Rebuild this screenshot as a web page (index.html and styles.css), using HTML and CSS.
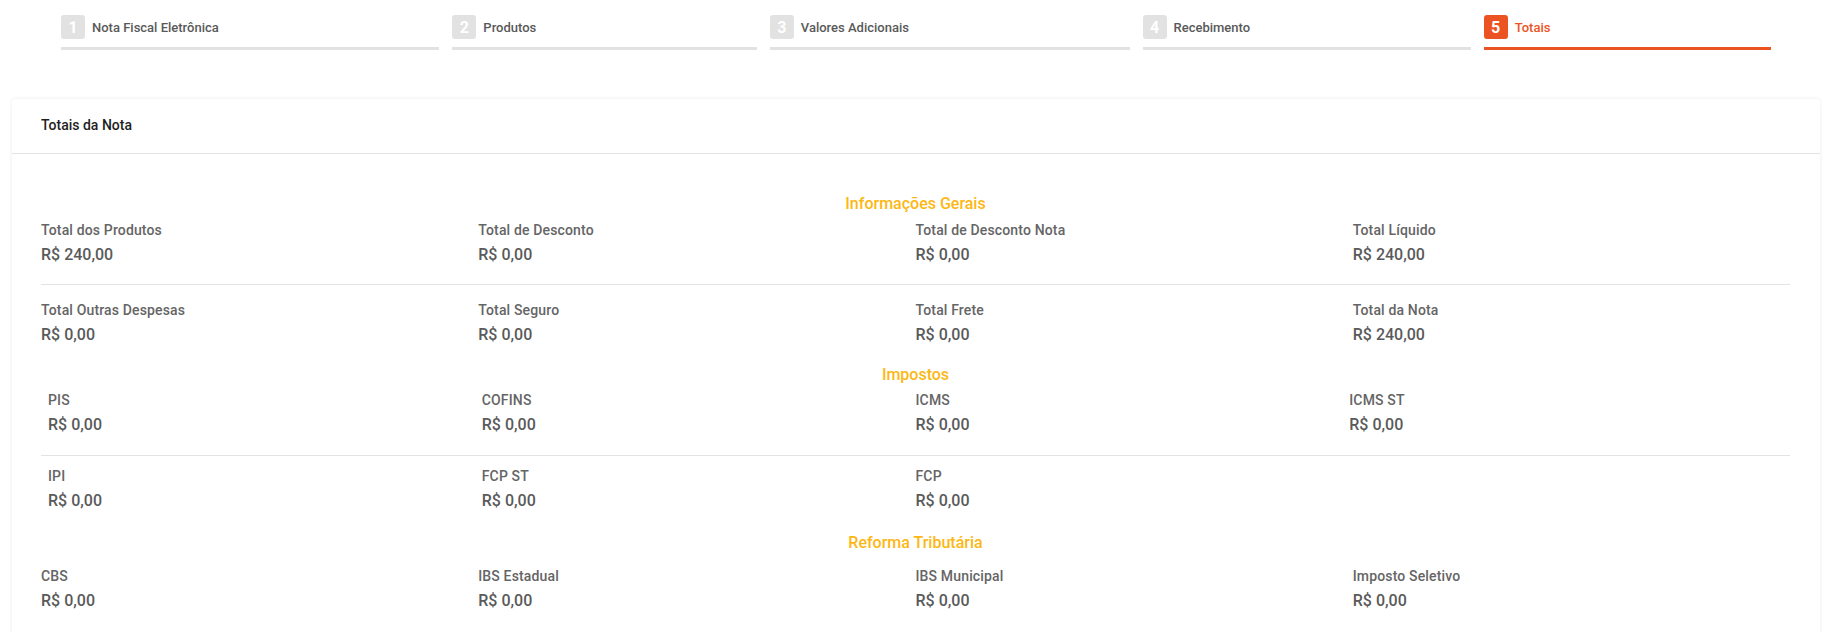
FILE: index.html
```html
<!DOCTYPE html>
<html lang="pt-BR">
<head>
<meta charset="utf-8">
<title>Totais</title>
<link rel="stylesheet" href="styles.css">
</head>
<body>
<nav class="stepper">
  <div class="step"><div class="step-head"><span class="step-num">1</span><span class="step-label">Nota Fiscal Eletrônica</span></div><div class="step-bar"></div></div>
  <div class="step"><div class="step-head"><span class="step-num">2</span><span class="step-label">Produtos</span></div><div class="step-bar"></div></div>
  <div class="step"><div class="step-head"><span class="step-num">3</span><span class="step-label">Valores Adicionais</span></div><div class="step-bar"></div></div>
  <div class="step"><div class="step-head"><span class="step-num">4</span><span class="step-label">Recebimento</span></div><div class="step-bar"></div></div>
  <div class="step active"><div class="step-head"><span class="step-num">5</span><span class="step-label">Totais</span></div><div class="step-bar"></div></div>
</nav>

<section class="card">
  <header class="card-header">Totais da Nota</header>
  <div class="card-body">
    <h3 class="section-title title-info">Informações Gerais</h3>
    <div class="grid row-first">
      <div class="field"><div class="label">Total dos Produtos</div><div class="value">R$ 240,00</div></div>
      <div class="field"><div class="label">Total de Desconto</div><div class="value">R$ 0,00</div></div>
      <div class="field"><div class="label">Total de Desconto Nota</div><div class="value">R$ 0,00</div></div>
      <div class="field"><div class="label">Total Líquido</div><div class="value">R$ 240,00</div></div>
    </div>
    <div class="divider div-info"></div>
    <div class="grid row-second">
      <div class="field"><div class="label">Total Outras Despesas</div><div class="value">R$ 0,00</div></div>
      <div class="field"><div class="label">Total Seguro</div><div class="value">R$ 0,00</div></div>
      <div class="field"><div class="label">Total Frete</div><div class="value">R$ 0,00</div></div>
      <div class="field"><div class="label">Total da Nota</div><div class="value">R$ 240,00</div></div>
    </div>

    <h3 class="section-title title-imp">Impostos</h3>
    <div class="grid inset row-imp1">
      <div class="field"><div class="label">PIS</div><div class="value">R$ 0,00</div></div>
      <div class="field"><div class="label">COFINS</div><div class="value">R$ 0,00</div></div>
      <div class="field"><div class="label">ICMS</div><div class="value">R$ 0,00</div></div>
      <div class="field"><div class="label">ICMS ST</div><div class="value">R$ 0,00</div></div>
    </div>
    <div class="divider div-imp"></div>
    <div class="grid inset row-imp2">
      <div class="field"><div class="label">IPI</div><div class="value">R$ 0,00</div></div>
      <div class="field"><div class="label">FCP ST</div><div class="value">R$ 0,00</div></div>
      <div class="field"><div class="label">FCP</div><div class="value">R$ 0,00</div></div>
    </div>

    <h3 class="section-title title-ref">Reforma Tributária</h3>
    <div class="grid row-ref">
      <div class="field"><div class="label">CBS</div><div class="value">R$ 0,00</div></div>
      <div class="field"><div class="label">IBS Estadual</div><div class="value">R$ 0,00</div></div>
      <div class="field"><div class="label">IBS Municipal</div><div class="value">R$ 0,00</div></div>
      <div class="field"><div class="label">Imposto Seletivo</div><div class="value">R$ 0,00</div></div>
    </div>
  </div>
</section>
</body>
</html>
```

FILE: styles.css
```css
* { box-sizing: border-box; }

html, body {
  margin: 0;
  padding: 0;
  background: #ffffff;
  font-family: Roboto, "Liberation Sans", Arial, sans-serif;
  overflow: hidden;
}

/* Stepper */
.stepper {
  display: flex;
  gap: 13px;
  padding: 15px 62px 0 61px;
}

.step {
  flex: 1 1 auto;
  display: flex;
  flex-direction: column;
}

.step-head {
  display: flex;
  align-items: center;
  gap: 7px;
  height: 24px;
}

.step-num {
  width: 24px;
  height: 24px;
  border-radius: 3px;
  background: #e2e2e2;
  color: #ffffff;
  font-size: 16px;
  font-weight: 700;
  display: flex;
  align-items: center;
  justify-content: center;
  flex: none;
}

.step-label {
  font-size: 13px;
  font-weight: 500;
  color: #595959;
  white-space: nowrap;
}

.step-bar {
  margin-top: 8px;
  height: 3px;
  background: #e2e2e2;
}

.step.active .step-num { background: #ec5322; }
.step.active .step-label { color: #ec5322; }
.step.active .step-bar { background: #ec5322; }

/* Card */
.card {
  margin: 49px 13px 0 12px;
  background: #ffffff;
  border-radius: 4px;
  box-shadow: 0 0 4px rgba(0, 0, 0, 0.08);
}

.card-header {
  height: 55px;
  padding: 16px 29px 0;
  font-size: 14px;
  font-weight: 500;
  line-height: 20px;
  color: #1f1f1f;
  border-bottom: 1px solid #e3e3e3;
}

.card-body {
  padding: 40px 30px 40px 29px;
}

.section-title {
  margin: 0;
  text-align: center;
  font-size: 16px;
  font-weight: 500;
  line-height: 20px;
  color: #fdb714;
}

.grid {
  display: grid;
  grid-template-columns: repeat(4, 1fr);
}

.grid.inset {
  padding: 0 7px;
}

.label {
  font-size: 14px;
  font-weight: 500;
  line-height: 20px;
  letter-spacing: 0.15px;
  color: #656565;
}

.value {
  margin-top: 4px;
  font-size: 16px;
  font-weight: 500;
  line-height: 22px;
  color: #5a5a5a;
}

.divider {
  height: 1px;
  background: #e3e3e3;
}

/* vertical rhythm */
.row-first { margin-top: 6px; }
.div-info { margin-top: 18px; }
.row-second { margin-top: 15px; }

.title-imp { margin-top: 19px; }
.row-imp1 { margin-top: 5px; }
.div-imp { margin-top: 19px; }
.row-imp2 { margin-top: 10px; }

.title-ref { margin-top: 21px; }
.row-ref { margin-top: 13px; }
```
